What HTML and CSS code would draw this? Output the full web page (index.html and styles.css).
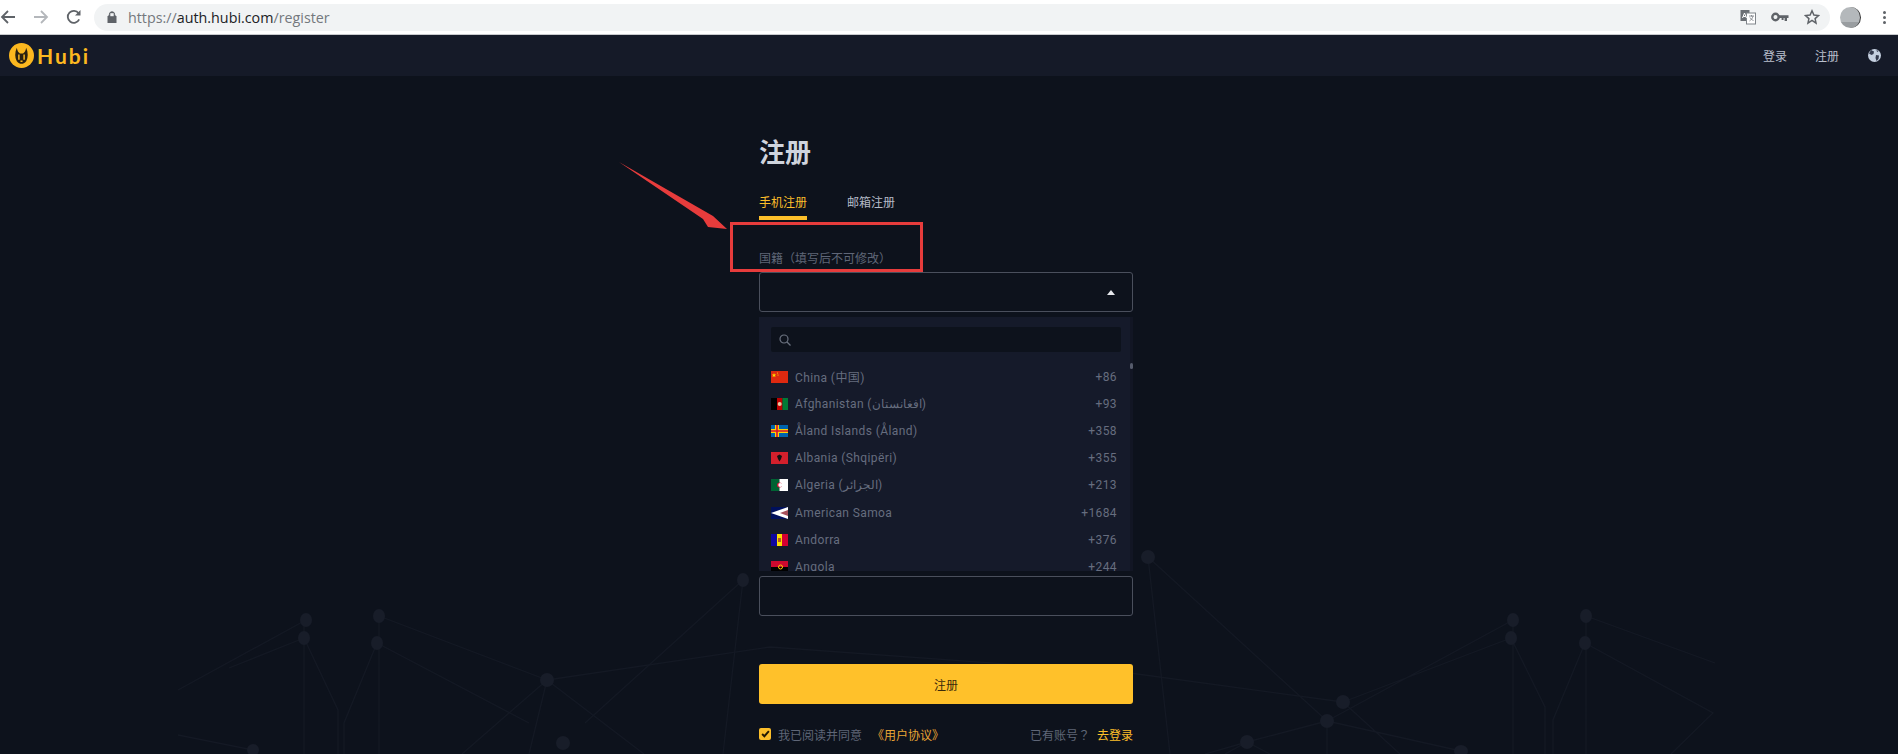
FILE: index.html
```html
<!DOCTYPE html>
<html>
<head>
    <title>Hubi - Register</title>
    <link rel="stylesheet" href="styles.css">
</head>
<body>
    <!-- Browser toolbar -->
    <div class="toolbar">
        <svg class="tool-icon" width="16" height="16" viewBox="0 0 16 16"><path d="M15 8H2M8 2L2 8l6 6" fill="none" stroke="#5f6368" stroke-width="1.8"/></svg>
        <svg class="tool-icon forward" width="16" height="16" viewBox="0 0 16 16"><path d="M1 8h13M8 2l6 6-6 6" fill="none" stroke="#b4b7bb" stroke-width="1.8"/></svg>
        <svg class="tool-icon reload" width="16" height="16" viewBox="0 0 16 16"><path d="M13.2 10.4A6 6 0 1 1 12.6 4.2" fill="none" stroke="#5f6368" stroke-width="1.8"/><path d="M14.5 1v5.5H9z" fill="#5f6368"/></svg>
        <div class="omnibox">
            <svg class="lock" width="10" height="12" viewBox="0 0 10 12"><path d="M2.4 5V3.4a2.6 2.6 0 0 1 5.2 0V5M1 5h8v7H1z" fill="#5f6368" stroke="#5f6368" stroke-width="1"/><rect x="3.3" y="2.2" width="3.4" height="3" fill="#f1f3f4"/></svg>
            <span class="url"><span class="url-dim">https://</span>auth.hubi.com<span class="url-dim">/register</span></span>
            <div class="omni-icons">
                <svg width="16" height="16" viewBox="0 0 16 16"><rect x="0.5" y="1" width="9" height="11" fill="#6b6f74"/><rect x="6.5" y="4" width="9" height="11" fill="#fff" stroke="#80858a"/><path d="M2.5 9l2-5 2 5M3.2 7.5h2.6" fill="none" stroke="#fff"/><path d="M9 7h5M11.5 6v1.500M13 7c-.5 2.500-2 4-3.500 5M10 8.500c.8 1.500 2 2.500 3.500 3" fill="none" stroke="#80858a" stroke-width=".9"/></svg>
                <svg width="18" height="10" viewBox="0 0 18 10"><circle cx="4.500" cy="5" r="3.200" fill="none" stroke="#5f6368" stroke-width="2.400"/><path d="M8 3.200h9.500v2.800h-1.500V9h-2.400V6h-1v2h-2V6H8z" fill="#5f6368"/></svg>
                <svg width="16" height="16" viewBox="0 0 16 16"><path d="M8 1.800l1.900 4.200 4.600.5-3.400 3.100.9 4.500L8 11.300l-4 2.800.9-4.500L1.500 6.500 6.100 6z" fill="none" stroke="#5f6368" stroke-width="1.500"/></svg>
            </div>
        </div>
        <div class="avatar"></div>
        <div class="menu-dots"><i></i><i></i><i></i></div>
    </div>

    <div class="site">
        <!-- Network pattern behind the form -->
        <svg class="network" width="1898" height="678" viewBox="0 76 1898 678">
            <g class="net-lines">
                <path d="M306 620L178 690M304 638L229 668M304 638L338 710V754M304 620V754"/>
                <path d="M379 616L547 680M379 616V754M377 643L344 723V754M377 643L529 723"/>
                <path d="M547 680L462 754M547 680L529 754M547 680L644 754M547 680L770 647L1130 673L1343 702"/>
                <path d="M743 580L723 754M743 580L585 723M178 735L253 750"/>
                <path d="M1148 557L1327 721M1148 557L1170 754M1513 620L1327 721M1511 638L1343 702"/>
                <path d="M1327 721L1247 742L1205 754M1327 721L1461 751M1327 721V754M1343 702L1400 754M1247 742L1270 754M1247 742L1225 754"/>
                <path d="M1511 638L1545 707V754M1513 620V754M1586 616L1715 663M1585 643L1713 713L1671 754M1585 643L1553 720V754M1586 616V754"/>
            </g>
            <g class="net-nodes">
                <ellipse cx="306" cy="620" rx="6" ry="7"/>
                <ellipse cx="304" cy="638" rx="6" ry="7"/>
                <ellipse cx="379" cy="616" rx="6" ry="7"/>
                <ellipse cx="377" cy="643" rx="6" ry="7"/>
                <ellipse cx="547" cy="680" rx="7" ry="7"/>
                <ellipse cx="743" cy="580" rx="6" ry="7"/>
                <ellipse cx="253" cy="750" rx="6" ry="6"/>
                <ellipse cx="563" cy="743" rx="7" ry="7"/>
                <ellipse cx="1148" cy="557" rx="7" ry="7"/>
                <ellipse cx="1513" cy="620" rx="6" ry="7"/>
                <ellipse cx="1511" cy="638" rx="6" ry="7"/>
                <ellipse cx="1586" cy="616" rx="6" ry="7"/>
                <ellipse cx="1585" cy="643" rx="6" ry="7"/>
                <ellipse cx="1327" cy="721" rx="7" ry="7"/>
                <ellipse cx="1343" cy="702" rx="7" ry="7"/>
                <ellipse cx="1247" cy="742" rx="7" ry="7"/>
                <ellipse cx="1461" cy="751" rx="7" ry="6"/>
            </g>
        </svg>

        <nav class="topnav">
            <div class="logo">
                <svg width="25" height="25" viewBox="0 0 24 24">
                    <circle cx="12" cy="12" r="12" fill="#fcb81f"/>
                    <path d="M7.500 4.500C8 7.500 9 9 10.500 10h3C15 9 16 7.500 16.500 4.500 18.500 9 18.500 14 16.500 17.500 15 19.500 13.500 20 12 20s-3-.5-4.500-2.500C5.500 14 5.500 9 7.500 4.500z" fill="#2a2110"/>
                    <path d="M9.500 11v5M14.500 11v5" stroke="#fcb81f" stroke-width="1.400"/>
                    <path d="M11 17.500h2" stroke="#fcb81f" stroke-width="1.400"/>
                </svg>
                <span class="logo-text">Hubi</span>
            </div>
            <div class="nav-links">
                <a>登录</a>
                <a>注册</a>
                <svg width="13" height="13" viewBox="0 0 13 13"><circle cx="6.500" cy="6.500" r="6.500" fill="#c5d0e0"/><path d="M3 1l3 1.500-.5 2.500-2 1L1 4.500zM8 6l3 .5-.5 3.500-2 2-1-3zM8.500 .8l2 1.500-1.500.8z" fill="#343b4e"/></svg>
            </div>
        </nav>

        <main class="register">
            <h1>注册</h1>
            <div class="tabs">
                <span class="tab active">手机注册</span>
                <span class="tab">邮箱注册</span>
            </div>

            <div class="label">国籍（填写后不可修改）</div>
            <div class="select-wrap">
                <div class="select"><span class="caret"></span></div>
                <div class="dropdown">
                    <div class="search">
                        <svg width="12" height="12" viewBox="0 0 12 12"><circle cx="5" cy="5" r="4" fill="none" stroke="#6b7280" stroke-width="1.200"/><path d="M8 8l3.500 3.500" stroke="#6b7280" stroke-width="1.200"/></svg>
                    </div>
                    <div class="thumb"></div>
                    <ul class="countries">
                        <li>
                            <svg class="flag" viewBox="0 0 17 12"><rect width="17" height="12" fill="#de2910"/><path d="M3 2l.6 1.600H5.200L4 4.600l.5 1.500L3 5.200l-1.500.9.500-1.500L.9 3.600h1.600z" fill="#ffde00"/><circle cx="6.500" cy="2" r=".6" fill="#ffde00"/><circle cx="7" cy="4" r=".6" fill="#ffde00"/></svg>
                            <span class="name">China (中国)</span><span class="code">+86</span>
                        </li>
                        <li>
                            <svg class="flag" viewBox="0 0 17 12"><rect width="6" height="12" fill="#000"/><rect x="6" width="5.500" height="12" fill="#be0000"/><rect x="11.500" width="5.500" height="12" fill="#007a36"/><circle cx="8.700" cy="6" r="2" fill="#e8c8a0"/></svg>
                            <span class="name">Afghanistan (افغانستان)</span><span class="code">+93</span>
                        </li>
                        <li>
                            <svg class="flag" viewBox="0 0 17 12"><rect width="17" height="12" fill="#0064ae"/><path d="M0 6h17M6 0v12" stroke="#ffd300" stroke-width="4"/><path d="M0 6h17M6 0v12" stroke="#d21034" stroke-width="1.600"/></svg>
                            <span class="name">Åland Islands (Åland)</span><span class="code">+358</span>
                        </li>
                        <li>
                            <svg class="flag" viewBox="0 0 17 12"><rect width="17" height="12" fill="#d3202c"/><path d="M8.500 2.500l2.500 1.500-1 3-1.500 2.500L7 7 6 4z" fill="#111"/></svg>
                            <span class="name">Albania (Shqipëri)</span><span class="code">+355</span>
                        </li>
                        <li>
                            <svg class="flag" viewBox="0 0 17 12"><rect width="8.500" height="12" fill="#006233"/><rect x="8.500" width="8.500" height="12" fill="#fff"/><circle cx="8.500" cy="6" r="2.500" fill="#d21034"/><circle cx="9.300" cy="6" r="2" fill="#fff"/></svg>
                            <span class="name">Algeria (الجزائر)</span><span class="code">+213</span>
                        </li>
                        <li>
                            <svg class="flag" viewBox="0 0 17 12"><rect width="17" height="12" fill="#00105c"/><path d="M17 0v12L0 6z" fill="#fff"/><path d="M17 3v6l-8-3z" fill="#a8505a"/></svg>
                            <span class="name">American Samoa</span><span class="code">+1684</span>
                        </li>
                        <li>
                            <svg class="flag" viewBox="0 0 17 12"><rect width="6" height="12" fill="#10069f"/><rect x="6" width="5" height="12" fill="#fedd00"/><rect x="11" width="6" height="12" fill="#d50032"/><rect x="7" y="4" width="3" height="4" fill="#b8562a"/></svg>
                            <span class="name">Andorra</span><span class="code">+376</span>
                        </li>
                        <li>
                            <svg class="flag" viewBox="0 0 17 12"><rect width="17" height="6" fill="#cc092f"/><rect y="6" width="17" height="6" fill="#000"/><circle cx="9.500" cy="6" r="2" fill="none" stroke="#ffcb00"/></svg>
                            <span class="name">Angola</span><span class="code">+244</span>
                        </li>
                    </ul>
                </div>
            </div>

            <div class="phone-field"></div>

            <button class="submit">注册</button>

            <div class="agree">
                <span class="check"><svg width="9" height="8" viewBox="0 0 8 7"><path d="M1 3.500L3 5.500 7 1" fill="none" stroke="#231a05" stroke-width="1.700"/></svg></span>
                <span class="agree-text">我已阅读并同意</span>
                <a class="terms">《用户协议》</a>
                <span class="have-account">已有账号？</span>
                <a class="to-login">去登录</a>
            </div>
        </main>

        <!-- Red annotation drawn on the screenshot -->
        <div class="note-box"></div>
        <svg class="note-arrow" width="120" height="80" viewBox="0 0 120 80"><path d="M0 1L94 55 108 68 89 66 84 58z" fill="#e73c3c"/></svg>
    </div>
</body>
</html>
```

FILE: styles.css
```css
* {
    box-sizing: border-box;
}
html, body {
    margin: 0;
    height: 754px;
    overflow: hidden;
}
body {
    font-family: "Roboto", "Noto Sans CJK SC", sans-serif;
    font-size: 12px;
    background: #0d121c;
}

/* browser toolbar */
.toolbar {
    height: 35px;
    background: #fff;
    border-bottom: 1px solid #c9cbce;
    display: flex;
    align-items: center;
}
.tool-icon {
    flex: none;
}
.forward {
    margin-left: 17px;
}
.reload {
    margin-left: 17px;
    margin-right: 12px;
}
.omnibox {
    width: 1736px;
    height: 27px;
    background: #f1f3f4;
    border-radius: 14px;
    display: flex;
    align-items: center;
    padding-left: 13px;
}
.lock {
    flex: none;
}
.url {
    margin-left: 11px;
    font-family: "Open Sans", sans-serif;
    font-size: 14.300px;
    color: #202124;
}
.url-dim {
    color: #74787d;
}
.omni-icons {
    margin-left: auto;
    margin-right: 10px;
    display: flex;
    align-items: center;
    gap: 15px;
}
.avatar {
    width: 21px;
    height: 21px;
    margin-left: 10px;
    border-radius: 50%;
    background: linear-gradient(#b4b8bb 70%, #999da0 70%);
    border-right: 1px solid #333;
}
.menu-dots {
    margin-left: 22px;
    display: flex;
    flex-direction: column;
    gap: 2px;
}
.menu-dots i {
    width: 3px;
    height: 3px;
    border-radius: 50%;
    background: #5f6368;
}

/* site */
.site {
    position: relative;
    height: 719px;
}
.network {
    position: absolute;
    left: 0;
    bottom: 0;
}
.net-lines path {
    fill: none;
    stroke: #141924;
    stroke-width: 1.300;
}
.net-nodes ellipse {
    fill: #181d29;
}
.topnav {
    position: relative;
    height: 41px;
    background: #151a28;
    display: flex;
    align-items: center;
    justify-content: space-between;
    padding: 0 17px 0 9px;
}
.logo {
    display: flex;
    align-items: center;
    gap: 3px;
}
.logo-text {
    font-family: "Lato", sans-serif;
    font-weight: 700;
    font-size: 21px;
    letter-spacing: 2px;
    color: #fcb81f;
}
.nav-links {
    display: flex;
    align-items: center;
    gap: 27px;
    color: #b9bfcc;
}
.nav-links a + a {
    margin-left: 1px;
}
.nav-links svg {
    margin-left: 2px;
}

/* register form */
.register {
    position: relative;
    width: 374px;
    margin-left: 759px;
    padding-top: 58px;
}
.register h1 {
    margin: 0;
    font-size: 26px;
    line-height: 38px;
    color: #cfd4dd;
}
.tabs {
    display: flex;
    gap: 40px;
    margin-top: 14px;
}
.tab {
    height: 34px;
    line-height: 34px;
    color: #b4bac7;
}
.tab.active {
    color: #fcbf2a;
    border-bottom: 4px solid #fcbf2a;
}
.label {
    margin-top: 29px;
    line-height: 20px;
    color: #5f6677;
}
.select-wrap {
    position: relative;
    margin-top: 3px;
}
.select {
    height: 40px;
    border: 1px solid #4a4f5c;
    border-radius: 3px;
    position: relative;
}
.caret {
    position: absolute;
    right: 17px;
    top: 17px;
    border: 4px solid transparent;
    border-top: 0;
    border-bottom: 5px solid #e6e8ec;
}
.dropdown {
    position: absolute;
    top: 45px;
    left: 0;
    width: 374px;
    height: 254px;
    background: #151a2a;
    overflow: hidden;
    z-index: 2;
    padding: 10px 0 0 12px;
}
.dropdown::after {
    content: "";
    position: absolute;
    top: 0;
    right: 0;
    width: 3px;
    height: 100%;
    background: #121624;
}
.thumb {
    position: absolute;
    top: 46px;
    right: 0;
    width: 3px;
    height: 6px;
    background: #555b6b;
    z-index: 1;
    border-radius: 2px;
}
.search {
    width: 350px;
    height: 25px;
    background: #0d121c;
    border-radius: 2px;
    display: flex;
    align-items: center;
    padding-left: 8px;
}
.countries {
    list-style: none;
    margin: 11px 0 0;
    padding: 0;
    width: 346px;
}
.countries li {
    height: 27.200px;
    display: flex;
    align-items: center;
    color: #666d7f;
    letter-spacing: 0.400px;
}
.flag {
    width: 17px;
    height: 12px;
    flex: none;
    margin-right: 7px;
}
.code {
    margin-left: auto;
}
.phone-field {
    margin-top: 264px;
    height: 40px;
    border: 1px solid #4a4f5c;
    border-radius: 3px;
}
.submit {
    display: block;
    width: 100%;
    height: 40px;
    margin-top: 48px;
    border: none;
    border-radius: 3px;
    background: #ffc12a;
    color: #3b2a0a;
    font-family: inherit;
    font-size: 12px;
}
.agree {
    display: flex;
    align-items: center;
    height: 20px;
    margin-top: 20px;
    color: #5f6677;
}
.check {
    width: 12px;
    height: 12px;
    border-radius: 2px;
    background: #fcbf2a;
    display: flex;
    align-items: center;
    justify-content: center;
    margin-right: 7px;
}
.terms {
    margin-left: 10px;
    color: #e8a535;
}
.have-account {
    margin-left: auto;
    font-family: "Noto Sans CJK TC", sans-serif;
}
.to-login {
    margin-left: 7px;
    color: #fcbf2a;
}

/* annotation */
.note-box {
    position: absolute;
    left: 730px;
    top: 187px;
    width: 193px;
    height: 50px;
    border: 3px solid #e73c3c;
    z-index: 3;
}
.note-arrow {
    position: absolute;
    left: 619px;
    top: 126px;
    z-index: 3;
}
```
